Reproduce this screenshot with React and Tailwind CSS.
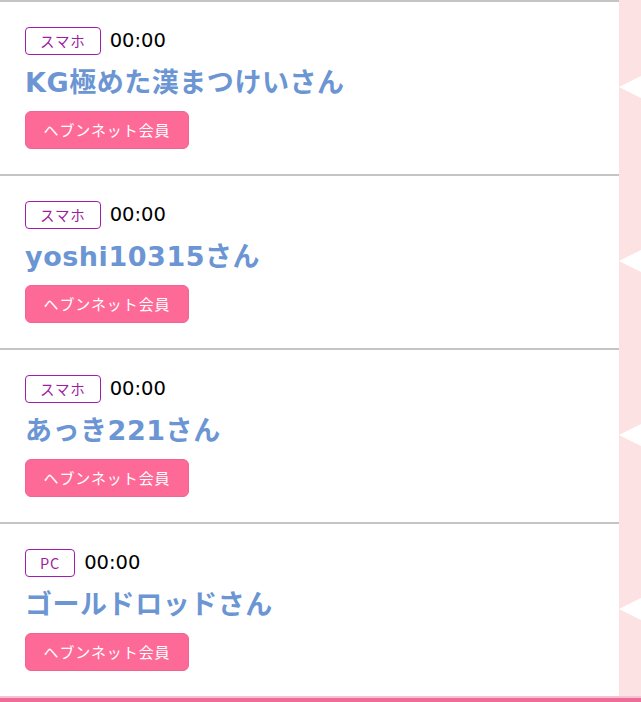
import React from "react";

const rows = [
  { device: "スマホ", time: "00:00", name: "KG極めた漢まつけいさん" },
  { device: "スマホ", time: "00:00", name: "yoshi10315さん" },
  { device: "スマホ", time: "00:00", name: "あっき221さん" },
  { device: "PC", time: "00:00", name: "ゴールドロッドさん" },
];

const font = { fontFamily: '"DejaVu Sans", "Noto Sans CJK JP", sans-serif' };
const jp = { fontFamily: '"Noto Sans CJK JP", sans-serif' };

export default function App() {
  return (
    <div className="w-[641px] h-[702px] overflow-hidden bg-white" style={font}>
      {rows.map((r, i) => (
        <div key={i} className="flex h-[174px]">
          {/* ENTRY */}
          <div className="flex-1 border-t-2 border-[#c4c4c4] pl-[25px] pt-[25px]">
            <div className="flex items-center gap-[9px] h-[28px]">
              <span
                className="h-[28px] flex items-center px-[14px] border-[1.5px] border-[#a21caf] rounded-[4px] text-[14.5px] tracking-[0.06em] text-[#9d1f9f]"
                style={jp}
              >
                {r.device}
              </span>
              <span className="text-[19.5px] text-black">{r.time}</span>
            </div>
            <div className="mt-[7px] h-[42px] flex items-center text-[27px] font-bold text-[#6b95d3] tracking-[0.02em]">
              {r.name}
            </div>
            <div
              className="mt-[7px] w-[164px] h-[38px] flex items-center justify-center rounded-[6px] bg-[#fe6a97] border border-[#ef6490] text-white text-[15px] tracking-[0.06em]"
              style={jp}
            >
              ヘブンネット会員
            </div>
          </div>
          {/* SIDE STRIP */}
          <div className="w-[22px] bg-[#fde2e3] flex items-center">
            <div className="w-0 h-0 border-y-[11px] border-y-transparent border-r-[22px] border-r-white" />
          </div>
        </div>
      ))}
      <div className="h-[2px] bg-[#f6c3d2]" />
      <div className="h-[4px] bg-[#ef6b98]" />
    </div>
  );
}
